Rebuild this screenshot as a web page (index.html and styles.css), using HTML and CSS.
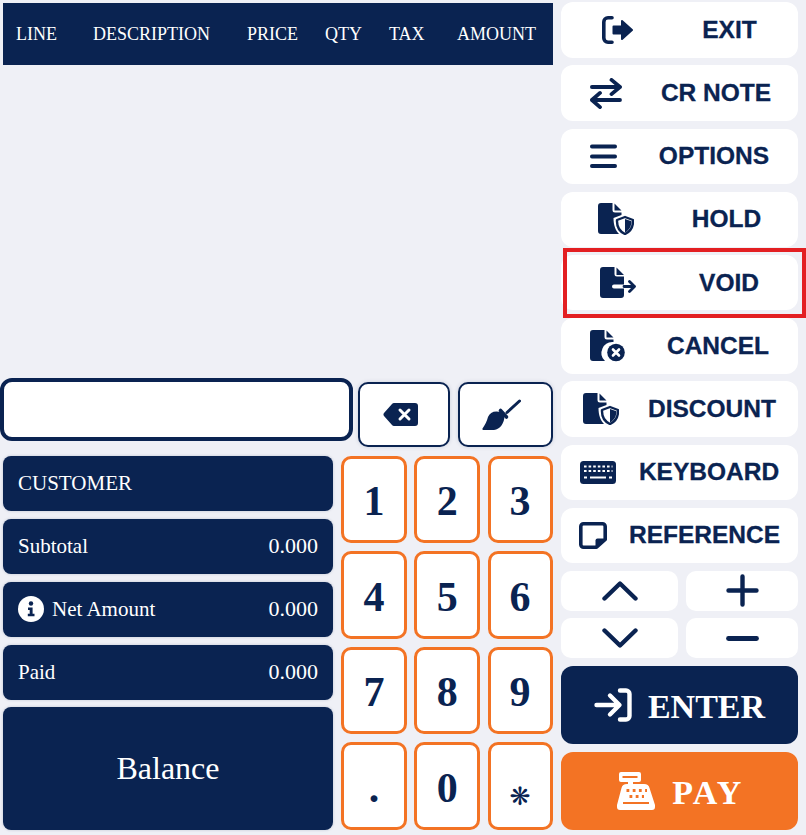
FILE: index.html
```html
<!DOCTYPE html>
<html lang="en">
<head>
    <meta charset="UTF-8">
    <meta name="viewport" content="width=device-width, initial-scale=1.0">
    <title>POS Register</title>
    <link rel="stylesheet" href="styles.css">
</head>
<body>
    <div class="pos">
        <!-- Left side: lines, entry, totals, keypad -->
        <div class="main">
            <div class="lines-head">
                <span>LINE</span>
                <span>DESCRIPTION</span>
                <span>PRICE</span>
                <span>QTY</span>
                <span>TAX</span>
                <span>AMOUNT</span>
            </div>
            <div class="lines-body"></div>

            <div class="entry">
                <input class="entry-input" type="text">
                <button class="entry-btn entry-back">
                    <svg width="35" height="23" viewBox="0 0 35 23"><path fill="#0a2351" d="M11 0H32a3 3 0 0 1 3 3V20a3 3 0 0 1-3 3H11a3 3 0 0 1-2-1L1 13a2.500 2.500 0 0 1 0-3L9 1a3 3 0 0 1 2-1Z"/><path stroke="#fff" stroke-width="3" stroke-linecap="round" d="M17 7L26 16M26 7L17 16"/></svg>
                </button>
                <button class="entry-btn entry-clear">
                    <svg width="39" height="31" viewBox="0 0 39 31"><path fill="none" stroke="#0a2351" stroke-width="3" stroke-linecap="round" d="M25 13.500L37.500 2"/><path stroke="#0a2351" stroke-width="3.600" stroke-linecap="round" d="M18.500 11.500L24.500 18"/><path fill="#0a2351" d="M20 13.500C13 11 8 13 6 18C5 22 3 26 .5 29.500C.2 30.300 .6 31 1.500 31H12C18 30.500 22.500 24 22.500 17Z"/></svg>
                </button>
            </div>

            <div class="bottom">
                <div class="totals">
                    <div class="total-row">CUSTOMER</div>
                    <div class="total-row"><span>Subtotal</span><span class="total-value">0.000</span></div>
                    <div class="total-row">
                        <span class="net-label">
                            <svg width="26" height="26" viewBox="0 0 26 26"><circle cx="13" cy="13" r="13" fill="#fff"/><circle cx="13" cy="7.500" r="2.200" fill="#0a2351"/><path fill="#0a2351" d="M10 11.500H14.600V17.800H16.500V20.300H9.800V17.800H11.700V14H10Z"/></svg>
                            Net Amount
                        </span>
                        <span class="total-value">0.000</span>
                    </div>
                    <div class="total-row"><span>Paid</span><span class="total-value">0.000</span></div>
                    <div class="total-row balance">Balance</div>
                </div>
                <div class="keypad">
                    <button class="key">1</button>
                    <button class="key">2</button>
                    <button class="key">3</button>
                    <button class="key">4</button>
                    <button class="key">5</button>
                    <button class="key">6</button>
                    <button class="key">7</button>
                    <button class="key">8</button>
                    <button class="key">9</button>
                    <button class="key">.</button>
                    <button class="key">0</button>
                    <button class="key key-star">❋</button>
                </div>
            </div>
        </div>

        <!-- Right side: action buttons -->
        <div class="actions">
            <button class="action act-exit">
                <svg width="31" height="28" viewBox="0 0 31 28"><path fill="none" stroke="#0a2351" stroke-width="3.600" stroke-linecap="round" d="M10 1.800H6A4.200 4.200 0 0 0 1.800 6V22A4.200 4.200 0 0 0 6 26.200H10"/><path fill="#0a2351" stroke="#0a2351" stroke-width="2" stroke-linejoin="round" d="M11.500 10.500H20V5L30 14L20 23V17.500H11.500Z"/></svg>
                <span>EXIT</span>
            </button>
            <button class="action act-crnote">
                <svg width="32" height="31" viewBox="0 0 32 31"><path fill="none" stroke="#0a2351" stroke-width="3.800" stroke-linecap="round" stroke-linejoin="round" d="M1.900 9H30M21.500 1.900L30 9L21.500 16.100M30 22H1.900M10 14.900L1.900 22L10 29.100"/></svg>
                <span>CR NOTE</span>
            </button>
            <button class="action act-options">
                <svg width="27" height="24" viewBox="0 0 27 24"><path stroke="#0a2351" stroke-width="3.800" stroke-linecap="round" d="M1.900 2.500H25.100M1.900 12.500H25.100M1.900 22H25.100"/></svg>
                <span>OPTIONS</span>
            </button>
            <button class="action act-hold">
                <svg width="36" height="32" viewBox="0 0 36 32"><use href="#file-shield"/></svg>
                <span>HOLD</span>
            </button>
            <button class="action act-void">
                <svg width="36" height="32" viewBox="0 0 36 32"><path fill="#0a2351" d="M3 0H14.500V7A2.500 2.500 0 0 0 17 9.500H24V17.500H14a2 2 0 0 0 0 4H24V28a3 3 0 0 1-3 3H3a3 3 0 0 1-3-3V3A3 3 0 0 1 3 0ZM16.500 .5L24 8H16.500Z"/><path fill="none" stroke="#0a2351" stroke-width="2.800" stroke-linecap="round" stroke-linejoin="round" d="M24 19.500H34.500M29.500 14.500L34.500 19.500L29.500 24.500"/></svg>
                <span>VOID</span>
            </button>
            <button class="action act-cancel">
                <svg width="35" height="32" viewBox="0 0 35 32"><path fill="#0a2351" d="M3 0H14.500V7A2.500 2.500 0 0 0 17 9.500H23.500V12A11 11 0 0 0 15 31H3a3 3 0 0 1-3-3V3A3 3 0 0 1 3 0ZM16.500 .5L23.500 7.500H16.500Z"/><circle cx="26" cy="22.500" r="8.800" fill="#0a2351"/><path stroke="#fff" stroke-width="2.600" stroke-linecap="round" d="M23 19.500L29 25.500M29 19.500L23 25.500"/></svg>
                <span>CANCEL</span>
            </button>
            <button class="action act-discount">
                <svg width="36" height="32" viewBox="0 0 36 32"><use href="#file-shield"/></svg>
                <span>DISCOUNT</span>
            </button>
            <button class="action act-keyboard">
                <svg width="36" height="23" viewBox="0 0 36 23"><rect width="36" height="23" rx="3.500" fill="#0a2351"/><path stroke="#fff" stroke-width="2.200" stroke-dasharray="2.600 2" d="M4 5.500H32.500M4 10H32.500"/><path stroke="#fff" stroke-width="2.200" d="M10 16.500H26M4 16.500H7M29 16.500H32"/></svg>
                <span>KEYBOARD</span>
            </button>
            <button class="action act-reference">
                <svg width="28" height="27" viewBox="0 0 28 27"><path fill="none" stroke="#0a2351" stroke-width="3.600" stroke-linejoin="round" d="M4.500 1.800H23.500A2.700 2.700 0 0 1 26.200 4.500V17.500L17.500 25.200H4.500A2.700 2.700 0 0 1 1.800 22.500V4.500A2.700 2.700 0 0 1 4.500 1.800Z"/><path fill="#0a2351" d="M16.500 25V18.500A2 2 0 0 1 18.500 16.500H26L26 18L18.500 25.500Z"/></svg>
                <span>REFERENCE</span>
            </button>
            <div class="steppers">
                <button class="step">
                    <svg width="36" height="20" viewBox="0 0 36 20"><path fill="none" stroke="#0a2351" stroke-width="4.400" stroke-linecap="round" stroke-linejoin="round" d="M2.500 17.500L18 2.500L33.500 17.500"/></svg>
                </button>
                <button class="step">
                    <svg width="33" height="33" viewBox="0 0 33 33"><path stroke="#0a2351" stroke-width="4.400" stroke-linecap="round" d="M16.500 2.500V30.500M2.500 16.500H30.500"/></svg>
                </button>
                <button class="step">
                    <svg width="36" height="20" viewBox="0 0 36 20"><path fill="none" stroke="#0a2351" stroke-width="4.400" stroke-linecap="round" stroke-linejoin="round" d="M2.500 2.500L18 17.500L33.500 2.500"/></svg>
                </button>
                <button class="step">
                    <svg width="33" height="5" viewBox="0 0 33 5"><path stroke="#0a2351" stroke-width="4.800" stroke-linecap="round" d="M2.500 2.500H30.500"/></svg>
                </button>
            </div>
            <button class="big big-enter">
                <svg width="38" height="34" viewBox="0 0 38 34"><path fill="none" stroke="#fff" stroke-width="4.400" stroke-linecap="round" stroke-linejoin="round" d="M2.500 17H25M16 7.500L25.500 17L16 26.500M26 2.500H32A3.500 3.500 0 0 1 35.500 6V28A3.500 3.500 0 0 1 32 31.500H26"/></svg>
                <span>ENTER</span>
            </button>
            <button class="big big-pay">
                <svg width="39" height="38" viewBox="0 0 39 38"><path fill="#fff" d="M4 0H22a2 2 0 0 1 2 2V8a2 2 0 0 1-2 2H16V12H27C30 12 32 13.500 32.500 16L38 33V35a3 3 0 0 1-3 3H3a3 3 0 0 1-3-3V33L4.500 16C5 13.500 7 12 10 12H11V10H4A2 2 0 0 1 2 8V2A2 2 0 0 1 4 0Z"/><path stroke="#f37324" stroke-width="2" d="M5.500 5H20.500M6 31H32"/><path stroke="#f37324" stroke-width="2.800" stroke-dasharray="2.800 3.400" d="M9.500 18.500H30M12.500 24.500H27"/></svg>
                <span>PAY</span>
            </button>
        </div>

        <!-- Highlight around the void button -->
        <div class="void-mark"></div>
    </div>

    <svg class="icon-defs" width="0" height="0">
        <symbol id="file-shield" viewBox="0 0 36 32">
            <path fill="#0a2351" d="M3 0H14.500V7A2.500 2.500 0 0 0 17 9.500H23.500V12L15.500 15C15.500 22 17.500 27.500 21 31H3a3 3 0 0 1-3-3V3A3 3 0 0 1 3 0ZM16.500 .5L23.500 7.500H16.500Z"/>
            <path fill="#fff" stroke="#0a2351" stroke-width="2.400" stroke-linejoin="round" d="M27 14L35 17C35.300 23 32.500 28.500 27 31C21.500 28.500 18.700 23 19 17Z"/>
            <path fill="#0a2351" d="M27 16L33.500 18.200C33.500 23 31 27.500 27 29.500Z"/>
        </symbol>
    </svg>
</body>
</html>
```

FILE: styles.css
```css
/* Base styles */
* {
    margin: 0;
    padding: 0;
    box-sizing: border-box;
}

body {
    font-family: 'Liberation Serif', serif;
    background-color: #eff0f6;
    color: #0a2351;
    overflow: hidden;
}

button {
    border: none;
    background: #fff;
    color: #0a2351;
    font-family: inherit;
}

.icon-defs {
    position: absolute;
}

/* Page layout */
.pos {
    position: relative;
    display: flex;
    width: 806px;
    height: 835px;
}

.main {
    width: 553px;
    height: 830px;
    display: flex;
    flex-direction: column;
}

/* Lines table */
.lines-head {
    display: grid;
    grid-template-columns: 77px 154px 78px 64px 68px auto;
    align-items: center;
    height: 62px;
    margin: 2.600px 0 0 3px;
    padding: 2px 0 0 13px;
    background-color: #0a2351;
    color: #fff;
    font-size: 18px;
}

.lines-body {
    height: 313px;
}

/* Entry row */
.entry {
    display: flex;
    align-items: flex-start;
    height: 78px;
}

.entry-input {
    width: 353px;
    height: 63px;
    border: 4px solid #0a2351;
    border-radius: 12px;
    background: #fff;
    outline: none;
}

.entry-btn {
    display: flex;
    align-items: center;
    justify-content: center;
    height: 65px;
    margin-top: 4px;
    border: 2px solid #0a2351;
    border-radius: 10px;
    box-shadow: 0 0 4px rgba(10, 35, 81, 0.15);
}

.entry-back {
    width: 92px;
    margin-left: 5px;
    padding-right: 7px;
}

.entry-clear {
    width: 95px;
    margin-left: 8px;
    padding-right: 8px;
}

/* Totals */
.bottom {
    display: flex;
    flex: 1;
}

.totals {
    display: flex;
    flex-direction: column;
    gap: 8px;
    width: 330px;
    margin-left: 3px;
}

.total-row {
    display: flex;
    align-items: center;
    justify-content: space-between;
    height: 55px;
    padding: 0 15px;
    border-radius: 8px;
    background-color: #0a2351;
    color: #fff;
    font-size: 21px;
    box-shadow: 0 0 3px rgba(10, 35, 81, 0.2);
}

.total-value {
    font-size: 22px;
}

.net-label {
    display: flex;
    align-items: center;
    gap: 8px;
}

.balance {
    flex: 1;
    justify-content: center;
    margin-top: -1px;
    font-size: 32px;
}

/* Keypad */
.keypad {
    display: grid;
    grid-template-columns: 66px 66px 65px;
    grid-auto-rows: 87.700px;
    column-gap: 7.300px;
    row-gap: 7.800px;
    margin-left: 8px;
}

.key {
    padding-top: 4px;
    border: 3px solid #f37324;
    border-radius: 10px;
    font-size: 42px;
    font-weight: bold;
}

.key-star {
    padding-top: 22px;
    font-family: 'DejaVu Sans', sans-serif;
    font-size: 25px;
    font-weight: normal;
}

/* Action buttons */
.actions {
    display: flex;
    flex-direction: column;
    gap: 7.800px;
    width: 237px;
    height: 827.800px;
    margin: 2.200px 0 0 8px;
}

.action {
    display: flex;
    flex: none;
    align-items: center;
    justify-content: center;
    height: 55.400px;
    border-radius: 12px;
    font-family: 'Liberation Sans', sans-serif;
    font-size: 24.500px;
    font-weight: bold;
    -webkit-text-stroke: 0.3px #0a2351;
}

.act-exit { gap: 69px; }
.act-crnote { gap: 39px; padding-left: 2px; }
.act-options { gap: 42px; }
.act-hold { gap: 58px; }
.act-void { gap: 63px; }
.act-cancel { gap: 42px; }
.act-discount { gap: 29px; }
.act-keyboard { gap: 23px; }
.act-reference { gap: 22px; }

.steppers {
    display: grid;
    grid-template-columns: 117px 112px;
    grid-auto-rows: 40px;
    gap: 7.600px 8px;
}

.step {
    display: flex;
    align-items: center;
    justify-content: center;
    border-radius: 10px;
}

.big {
    display: flex;
    flex: 1;
    align-items: center;
    justify-content: center;
    gap: 16px;
    border-radius: 12px;
    color: #fff;
    font-size: 34px;
    font-weight: bold;
}

.big span {
    padding-top: 3px;
}

.big-enter {
    background-color: #0a2351;
}

.big-pay {
    padding-left: 2px;
    background-color: #f37324;
    letter-spacing: 2.500px;
}

/* Red highlight box, sits over the void button */
.void-mark {
    position: absolute;
    left: 563px;
    top: 248px;
    width: 243px;
    height: 70px;
    border: 4.500px solid #e31f22;
}
```
